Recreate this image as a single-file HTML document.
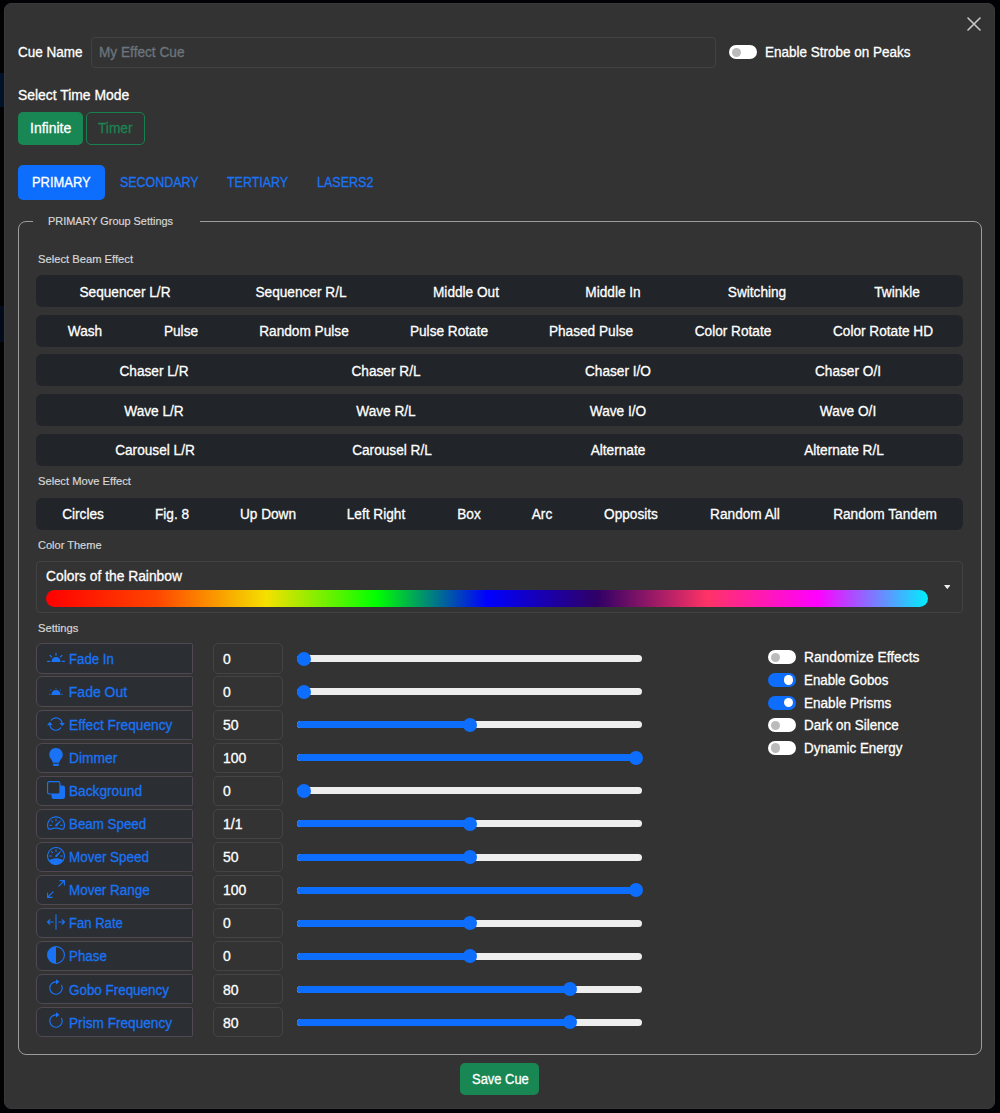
<!DOCTYPE html>
<html><head><meta charset="utf-8"><style>
*{box-sizing:border-box;margin:0;padding:0}
html,body{width:1000px;height:1113px;overflow:hidden;background:#020204;font-family:"Liberation Sans",sans-serif;color:#fff}
.modal{position:absolute;left:4px;top:3px;width:991px;height:1106.2px;background:#333;border:1px solid #393939;border-radius:7px}
.a{position:absolute;white-space:nowrap;line-height:1;transform-origin:0 0;-webkit-text-stroke:0.3px currentColor}
.input{position:absolute;border:1px solid #424242;border-radius:6px}
.box{position:absolute;border-radius:5px}
.row{position:absolute;left:36px;width:927px;height:32px;background:#212529;border-radius:6px}
.fs{position:absolute;left:17.5px;top:220.6px;width:964.2px;height:834.2px;border:1.5px solid #9c9c9c;border-radius:8px}
.lg{position:absolute;left:33px;top:214px;width:167px;height:14px;background:#333}
.tog{position:absolute;width:28px;height:14px;border-radius:7px;background:#fff}
.tog::after{content:"";position:absolute;left:2.8px;top:2.5px;width:9.3px;height:9.3px;border-radius:50%;background:#bbb}
.tog.on{background:#0d6efd}
.tog.on::after{left:15.9px;background:#fff}
.lbl{position:absolute;left:36px;width:157px;height:30.4px;background:#2b2f33;border:1px solid #504852;border-radius:6px 1.5px 1.5px 6px}
.lbl svg{position:absolute;left:10px;top:4.5px}
.val{position:absolute;left:213.2px;width:69.8px;height:30.4px;border:1px solid #444;border-radius:5px}
.sl{position:absolute;left:297px;width:345px;height:7px;border-radius:4px;background:#eee}
.sl .f{position:absolute;left:0;top:0;height:7px;border-radius:4px;background:#0d6efd}
.sl .k{position:absolute;top:-3.5px;width:14px;height:14px;border-radius:50%;background:#0d6efd}
</style></head><body>
<div style="position:absolute;left:0;top:72.6px;width:5px;height:34px;background:#00112a"></div><div style="position:absolute;left:0;top:305.5px;width:5px;height:36px;background:#020b1c"></div>
<div class="modal"></div>
<svg style="position:absolute;left:967px;top:17px" width="14" height="14" viewBox="0 0 14 14"><path d="M1 1L13 13M13 1L1 13" stroke="#c8c8c8" stroke-width="1.6" stroke-linecap="round"/></svg>
<div class="a" style="left:18px;top:45px;font-size:14px;transform:scaleX(0.964);">Cue Name</div>
<div class="input" style="left:90.5px;top:37.1px;width:625.5px;height:30.8px;border-radius:4px"></div>
<div class="a" style="left:99px;top:45px;font-size:14px;color:#6c757d;transform:scaleX(0.975);">My Effect Cue</div>
<div class="tog" style="left:729.3px;top:45px;height:14.4px"></div>
<div class="a" style="left:765px;top:45px;font-size:14px;transform:scaleX(0.963);">Enable Strobe on Peaks</div>
<div class="a" style="left:18px;top:88px;font-size:14px;transform:scaleX(0.992);">Select Time Mode</div>
<div class="box" style="left:18px;top:112px;width:65px;height:32.5px;background:#198754"></div>
<div class="a" style="left:30px;top:121px;font-size:14px;">Infinite</div>
<div class="box" style="left:86px;top:112px;width:59px;height:32.5px;border:1px solid #18804f"></div>
<div class="a" style="left:98px;top:121px;font-size:14px;color:#1b8352;transform:scaleX(0.978);">Timer</div>
<div class="box" style="left:18px;top:165px;width:87px;height:34.5px;background:#0d6efd"></div>
<div class="a" style="left:32.4px;top:175px;font-size:14px;transform:scaleX(0.922);">PRIMARY</div>
<div class="a" style="left:119.5px;top:175px;font-size:14px;color:#1a73f5;transform:scaleX(0.889);">SECONDARY</div>
<div class="a" style="left:226.9px;top:175px;font-size:14px;color:#1a73f5;transform:scaleX(0.890);">TERTIARY</div>
<div class="a" style="left:316.6px;top:175px;font-size:14px;color:#1a73f5;transform:scaleX(0.895);">LASERS2</div>
<div class="fs"></div>
<div class="lg"></div>
<div class="a" style="left:48px;top:214.9px;font-size:11.6px;color:#d6d6d6;transform:scaleX(0.940);-webkit-text-stroke-width:0.2px">PRIMARY Group Settings</div>
<div class="a" style="left:37.6px;top:252.8px;font-size:11.6px;color:#d6d6d6;transform:scaleX(0.966);-webkit-text-stroke-width:0.2px">Select Beam Effect</div>
<div class="row" style="top:275px"></div>
<div class="a" style="left:125.25px;top:284.5px;font-size:14px;transform-origin:50% 0;transform:translateX(-50%) scaleX(0.975);">Sequencer L/R</div>
<div class="a" style="left:301.25px;top:284.5px;font-size:14px;transform-origin:50% 0;transform:translateX(-50%) scaleX(0.975);">Sequencer R/L</div>
<div class="a" style="left:465.75px;top:284.5px;font-size:14px;transform-origin:50% 0;transform:translateX(-50%) scaleX(0.975);">Middle Out</div>
<div class="a" style="left:613.25px;top:284.5px;font-size:14px;transform-origin:50% 0;transform:translateX(-50%) scaleX(0.975);">Middle In</div>
<div class="a" style="left:757.25px;top:284.5px;font-size:14px;transform-origin:50% 0;transform:translateX(-50%) scaleX(0.975);">Switching</div>
<div class="a" style="left:896.75px;top:284.5px;font-size:14px;transform-origin:50% 0;transform:translateX(-50%) scaleX(0.975);">Twinkle</div>
<div class="row" style="top:314.7px"></div>
<div class="a" style="left:84.75px;top:324.2px;font-size:14px;transform-origin:50% 0;transform:translateX(-50%) scaleX(0.975);">Wash</div>
<div class="a" style="left:180.5px;top:324.2px;font-size:14px;transform-origin:50% 0;transform:translateX(-50%) scaleX(0.975);">Pulse</div>
<div class="a" style="left:303.75px;top:324.2px;font-size:14px;transform-origin:50% 0;transform:translateX(-50%) scaleX(0.975);">Random Pulse</div>
<div class="a" style="left:449px;top:324.2px;font-size:14px;transform-origin:50% 0;transform:translateX(-50%) scaleX(0.975);">Pulse Rotate</div>
<div class="a" style="left:591px;top:324.2px;font-size:14px;transform-origin:50% 0;transform:translateX(-50%) scaleX(0.975);">Phased Pulse</div>
<div class="a" style="left:733px;top:324.2px;font-size:14px;transform-origin:50% 0;transform:translateX(-50%) scaleX(0.975);">Color Rotate</div>
<div class="a" style="left:883px;top:324.2px;font-size:14px;transform-origin:50% 0;transform:translateX(-50%) scaleX(0.975);">Color Rotate HD</div>
<div class="row" style="top:354.2px"></div>
<div class="a" style="left:154px;top:363.7px;font-size:14px;transform-origin:50% 0;transform:translateX(-50%) scaleX(0.975);">Chaser L/R</div>
<div class="a" style="left:386px;top:363.7px;font-size:14px;transform-origin:50% 0;transform:translateX(-50%) scaleX(0.975);">Chaser R/L</div>
<div class="a" style="left:618px;top:363.7px;font-size:14px;transform-origin:50% 0;transform:translateX(-50%) scaleX(0.975);">Chaser I/O</div>
<div class="a" style="left:848px;top:363.7px;font-size:14px;transform-origin:50% 0;transform:translateX(-50%) scaleX(0.975);">Chaser O/I</div>
<div class="row" style="top:394px"></div>
<div class="a" style="left:154px;top:403.5px;font-size:14px;transform-origin:50% 0;transform:translateX(-50%) scaleX(0.975);">Wave L/R</div>
<div class="a" style="left:386px;top:403.5px;font-size:14px;transform-origin:50% 0;transform:translateX(-50%) scaleX(0.975);">Wave R/L</div>
<div class="a" style="left:618px;top:403.5px;font-size:14px;transform-origin:50% 0;transform:translateX(-50%) scaleX(0.975);">Wave I/O</div>
<div class="a" style="left:848px;top:403.5px;font-size:14px;transform-origin:50% 0;transform:translateX(-50%) scaleX(0.975);">Wave O/I</div>
<div class="row" style="top:433.6px"></div>
<div class="a" style="left:155px;top:443.1px;font-size:14px;transform-origin:50% 0;transform:translateX(-50%) scaleX(0.975);">Carousel L/R</div>
<div class="a" style="left:392px;top:443.1px;font-size:14px;transform-origin:50% 0;transform:translateX(-50%) scaleX(0.975);">Carousel R/L</div>
<div class="a" style="left:618px;top:443.1px;font-size:14px;transform-origin:50% 0;transform:translateX(-50%) scaleX(0.975);">Alternate</div>
<div class="a" style="left:844px;top:443.1px;font-size:14px;transform-origin:50% 0;transform:translateX(-50%) scaleX(0.975);">Alternate R/L</div>
<div class="a" style="left:37.6px;top:474.8px;font-size:11.6px;color:#d6d6d6;transform:scaleX(0.964);-webkit-text-stroke-width:0.2px">Select Move Effect</div>
<div class="row" style="top:497.5px"></div>
<div class="a" style="left:83px;top:507px;font-size:14px;transform-origin:50% 0;transform:translateX(-50%) scaleX(0.975);">Circles</div>
<div class="a" style="left:172px;top:507px;font-size:14px;transform-origin:50% 0;transform:translateX(-50%) scaleX(0.975);">Fig. 8</div>
<div class="a" style="left:268px;top:507px;font-size:14px;transform-origin:50% 0;transform:translateX(-50%) scaleX(0.975);">Up Down</div>
<div class="a" style="left:376px;top:507px;font-size:14px;transform-origin:50% 0;transform:translateX(-50%) scaleX(0.975);">Left Right</div>
<div class="a" style="left:469px;top:507px;font-size:14px;transform-origin:50% 0;transform:translateX(-50%) scaleX(0.975);">Box</div>
<div class="a" style="left:542px;top:507px;font-size:14px;transform-origin:50% 0;transform:translateX(-50%) scaleX(0.975);">Arc</div>
<div class="a" style="left:631px;top:507px;font-size:14px;transform-origin:50% 0;transform:translateX(-50%) scaleX(0.975);">Opposits</div>
<div class="a" style="left:745px;top:507px;font-size:14px;transform-origin:50% 0;transform:translateX(-50%) scaleX(0.975);">Random All</div>
<div class="a" style="left:885px;top:507px;font-size:14px;transform-origin:50% 0;transform:translateX(-50%) scaleX(0.975);">Random Tandem</div>
<div class="a" style="left:37.7px;top:538.8px;font-size:11.6px;color:#d6d6d6;transform:scaleX(0.952);-webkit-text-stroke-width:0.2px">Color Theme</div>
<div class="input" style="left:36px;top:560.6px;width:926.8px;height:52px;border-color:#424242;border-radius:4px"></div>
<div class="a" style="left:46.4px;top:569px;font-size:14px;transform:scaleX(0.987);">Colors of the Rainbow</div>
<div style="position:absolute;left:46px;top:590px;width:882px;height:17px;border-radius:9px;background:linear-gradient(90deg,#ff0000 0%,#ff4500 12.5%,#f5e000 25%,#00ff00 37.5%,#0000ff 50%,#300066 62.5%,#ff3366 75%,#ff00ff 87.5%,#00eeff 100%)"></div>
<svg style="position:absolute;left:943.8px;top:585.2px" width="6.5" height="4.2" viewBox="0 0 8 5"><path d="M0 0H8L4 5Z" fill="#eee"/></svg>
<div class="a" style="left:37.7px;top:621.8px;font-size:11.6px;color:#d6d6d6;transform:scaleX(0.962);-webkit-text-stroke-width:0.2px">Settings</div>
<div class="lbl" style="top:643.4px"><svg width="18" height="18" viewBox="0 0 16 16" fill="#1a73f5"><path d="M8 3a.5.5 0 0 1 .5.5v2a.5.5 0 0 1-1 0v-2A.5.5 0 0 1 8 3m8 8a.5.5 0 0 1-.5.5h-2a.5.5 0 0 1 0-1h2a.5.5 0 0 1 .5.5m-13.5.5a.5.5 0 0 0 0-1h-2a.5.5 0 0 0 0 1zm11.157-6.157a.5.5 0 0 1 0 .707l-1.414 1.414a.5.5 0 1 1-.707-.707l1.414-1.414a.5.5 0 0 1 .707 0m-9.9 2.121a.5.5 0 0 0 .707-.707L3.05 5.343a.5.5 0 1 0-.707.707zM8 7a4 4 0 0 0-4 4 .5.5 0 0 0 .5.5h7a.5.5 0 0 0 .5-.5 4 4 0 0 0-4-4"/></svg></div>
<div class="a" style="left:68.8px;top:652.0px;font-size:14px;color:#1a73f5;transform:scaleX(0.943);">Fade In</div>
<div class="val" style="top:643.4px"></div>
<div class="a" style="left:223px;top:652.0px;font-size:14px;">0</div>
<div class="sl" style="top:655.2px"><div class="f" style="width:10.0px"></div><div class="k" style="left:0.0px"></div></div>
<div class="lbl" style="top:676.4px"><svg width="18" height="18" viewBox="0 0 16 16" fill="#1a73f5"><path d="M8.5 5.5a.5.5 0 1 1-1 0 .5.5 0 0 1 1 0m5 6a.5.5 0 1 1 0-1 .5.5 0 0 1 0 1m-11 0a.5.5 0 1 1 0-1 .5.5 0 0 1 0 1m9.743-4.036a.5.5 0 1 1-.707-.707.5.5 0 0 1 .707.707m-8.486-.707a.5.5 0 1 0-.707.707.5.5 0 0 0 .707-.707M8 7a4 4 0 0 0-4 4 .5.5 0 0 0 .5.5h7a.5.5 0 0 0 .5-.5 4 4 0 0 0-4-4"/></svg></div>
<div class="a" style="left:68.8px;top:685.05px;font-size:14px;color:#1a73f5;">Fade Out</div>
<div class="val" style="top:676.4px"></div>
<div class="a" style="left:223px;top:685.05px;font-size:14px;">0</div>
<div class="sl" style="top:688.2px"><div class="f" style="width:10.0px"></div><div class="k" style="left:0.0px"></div></div>
<div class="lbl" style="top:709.5px"><svg width="18" height="18" viewBox="0 0 16 16" fill="#1a73f5"><path d="M11.534 7h3.932a.25.25 0 0 1 .192.41l-1.966 2.36a.25.25 0 0 1-.384 0l-1.966-2.36a.25.25 0 0 1 .192-.41m-11 2h3.932a.25.25 0 0 0 .192-.41L2.692 6.23a.25.25 0 0 0-.384 0L.342 8.59A.25.25 0 0 0 .534 9"/><path fill-rule="evenodd" d="M8 3c-1.552 0-2.94.707-3.857 1.818a.5.5 0 1 1-.771-.636A6.002 6.002 0 0 1 13.917 7H12.9A5 5 0 0 0 8 3M3.1 9a5.002 5.002 0 0 0 8.757 2.182.5.5 0 1 1 .771.636A6.002 6.002 0 0 1 2.083 9z"/></svg></div>
<div class="a" style="left:68.8px;top:718.1px;font-size:14px;color:#1a73f5;transform:scaleX(0.979);">Effect Frequency</div>
<div class="val" style="top:709.5px"></div>
<div class="a" style="left:223px;top:718.1px;font-size:14px;">50</div>
<div class="sl" style="top:721.3px"><div class="f" style="width:176.0px"></div><div class="k" style="left:166.0px"></div></div>
<div class="lbl" style="top:742.5px"><svg width="18" height="18" viewBox="0 0 16 16" fill="#1a73f5"><path d="M2 6a6 6 0 1 1 10.174 4.31c-.203.196-.359.4-.453.619l-.762 1.769A.5.5 0 0 1 10.5 13h-5a.5.5 0 0 1-.46-.302l-.761-1.77a2 2 0 0 0-.453-.618A5.98 5.98 0 0 1 2 6m3 8.5a.5.5 0 0 1 .5-.5h5a.5.5 0 0 1 0 1l-.224.447a1 1 0 0 1-.894.553H6.618a1 1 0 0 1-.894-.553L5.5 15a.5.5 0 0 1-.5-.5"/></svg></div>
<div class="a" style="left:68.8px;top:751.15px;font-size:14px;color:#1a73f5;transform:scaleX(0.988);">Dimmer</div>
<div class="val" style="top:742.5px"></div>
<div class="a" style="left:223px;top:751.15px;font-size:14px;">100</div>
<div class="sl" style="top:754.3px"><div class="f" style="width:342.0px"></div><div class="k" style="left:332.0px"></div></div>
<div class="lbl" style="top:775.6px"><svg width="18" height="18" viewBox="0 0 16 16" fill="#1a73f5"><path d="M0 2a2 2 0 0 1 2-2h8a2 2 0 0 1 2 2v2h2a2 2 0 0 1 2 2v8a2 2 0 0 1-2 2H6a2 2 0 0 1-2-2v-2H2a2 2 0 0 1-2-2zm2-1a1 1 0 0 0-1 1v8a1 1 0 0 0 1 1h8a1 1 0 0 0 1-1V2a1 1 0 0 0-1-1z"/></svg></div>
<div class="a" style="left:68.8px;top:784.1999999999999px;font-size:14px;color:#1a73f5;transform:scaleX(0.977);">Background</div>
<div class="val" style="top:775.6px"></div>
<div class="a" style="left:223px;top:784.1999999999999px;font-size:14px;">0</div>
<div class="sl" style="top:787.4px"><div class="f" style="width:10.0px"></div><div class="k" style="left:0.0px"></div></div>
<div class="lbl" style="top:808.6px"><svg width="18" height="18" viewBox="0 0 16 16" fill="#1a73f5"><path d="M8 4a.5.5 0 0 1 .5.5V6a.5.5 0 0 1-1 0V4.5A.5.5 0 0 1 8 4M3.732 5.732a.5.5 0 0 1 .707 0l.915.914a.5.5 0 1 1-.708.708l-.914-.915a.5.5 0 0 1 0-.707M2 10a.5.5 0 0 1 .5-.5h1.586a.5.5 0 0 1 0 1H2.5A.5.5 0 0 1 2 10m9.5 0a.5.5 0 0 1 .5-.5h1.5a.5.5 0 0 1 0 1H12a.5.5 0 0 1-.5-.5m.754-4.246a.39.39 0 0 0-.527-.02L7.547 9.31a.91.91 0 1 0 1.302 1.258l3.434-4.297a.39.39 0 0 0-.029-.518z"/><path fill-rule="evenodd" d="M0 10a8 8 0 1 1 15.547 2.661c-.442 1.253-1.845 1.602-2.932 1.25C11.309 13.488 9.475 13 8 13c-1.474 0-3.31.488-4.615.911-1.087.352-2.49.003-2.932-1.25A8 8 0 0 1 0 10m8-7a7 7 0 0 0-6.603 9.329c.203.575.923.876 1.68.63C4.397 12.533 6.358 12 8 12s3.604.532 4.923.96c.757.245 1.477-.056 1.68-.631A7 7 0 0 0 8 3"/></svg></div>
<div class="a" style="left:68.8px;top:817.25px;font-size:14px;color:#1a73f5;transform:scaleX(0.954);">Beam Speed</div>
<div class="val" style="top:808.6px"></div>
<div class="a" style="left:223px;top:817.25px;font-size:14px;">1/1</div>
<div class="sl" style="top:820.4px"><div class="f" style="width:176.0px"></div><div class="k" style="left:166.0px"></div></div>
<div class="lbl" style="top:841.7px"><svg width="18" height="18" viewBox="0 0 16 16" fill="#1a73f5"><path d="M8 2a.5.5 0 0 1 .5.5V4a.5.5 0 0 1-1 0V2.5A.5.5 0 0 1 8 2M3.732 3.732a.5.5 0 0 1 .707 0l.915.914a.5.5 0 1 1-.708.708l-.914-.915a.5.5 0 0 1 0-.707M2 8a.5.5 0 0 1 .5-.5h1.586a.5.5 0 0 1 0 1H2.5A.5.5 0 0 1 2 8m9.5 0a.5.5 0 0 1 .5-.5h1.5a.5.5 0 0 1 0 1H12a.5.5 0 0 1-.5-.5m.754-4.246a.39.39 0 0 0-.527-.02L7.547 7.31A.91.91 0 1 0 8.85 8.569l3.434-4.297a.39.39 0 0 0-.029-.518z"/><path fill-rule="evenodd" d="M6.664 15.889A8 8 0 1 1 9.336.11a8 8 0 0 1-2.672 15.78zm-4.665-4.283A11.95 11.95 0 0 1 8 10c2.186 0 4.236.585 5.999 1.606a7 7 0 1 0-11.998 0"/></svg></div>
<div class="a" style="left:68.8px;top:850.3px;font-size:14px;color:#1a73f5;transform:scaleX(0.961);">Mover Speed</div>
<div class="val" style="top:841.7px"></div>
<div class="a" style="left:223px;top:850.3px;font-size:14px;">50</div>
<div class="sl" style="top:853.5px"><div class="f" style="width:176.0px"></div><div class="k" style="left:166.0px"></div></div>
<div class="lbl" style="top:874.8px"><svg width="18" height="18" viewBox="0 0 16 16" fill="#1a73f5"><path fill-rule="evenodd" d="M5.828 10.172a.5.5 0 0 0-.707 0l-4.096 4.096V11.5a.5.5 0 0 0-1 0v3.975a.5.5 0 0 0 .5.5H4.5a.5.5 0 0 0 0-1H1.732l4.096-4.096a.5.5 0 0 0 0-.707m4.344-4.344a.5.5 0 0 0 .707 0l4.096-4.096V4.5a.5.5 0 1 0 1 0V.525a.5.5 0 0 0-.5-.5H11.5a.5.5 0 0 0 0 1h2.768l-4.096 4.096a.5.5 0 0 0 0 .707"/></svg></div>
<div class="a" style="left:68.8px;top:883.35px;font-size:14px;color:#1a73f5;transform:scaleX(0.960);">Mover Range</div>
<div class="val" style="top:874.8px"></div>
<div class="a" style="left:223px;top:883.35px;font-size:14px;">100</div>
<div class="sl" style="top:886.5px"><div class="f" style="width:342.0px"></div><div class="k" style="left:332.0px"></div></div>
<div class="lbl" style="top:907.8px"><svg width="18" height="18" viewBox="0 0 16 16" fill="#1a73f5"><path fill-rule="evenodd" d="M8 15a.5.5 0 0 1-.5-.5v-13a.5.5 0 0 1 1 0v13a.5.5 0 0 1-.5.5M.146 8.354a.5.5 0 0 1 0-.708l2-2a.5.5 0 1 1 .708.708L1.707 7.5H5.5a.5.5 0 0 1 0 1H1.707l1.147 1.146a.5.5 0 0 1-.708.708zM10 8a.5.5 0 0 1 .5-.5h3.793l-1.147-1.146a.5.5 0 0 1 .708-.708l2 2a.5.5 0 0 1 0 .708l-2 2a.5.5 0 0 1-.708-.708L14.293 8.5H10.5A.5.5 0 0 1 10 8"/></svg></div>
<div class="a" style="left:68.8px;top:916.4px;font-size:14px;color:#1a73f5;transform:scaleX(0.934);">Fan Rate</div>
<div class="val" style="top:907.8px"></div>
<div class="a" style="left:223px;top:916.4px;font-size:14px;">0</div>
<div class="sl" style="top:919.6px"><div class="f" style="width:176.0px"></div><div class="k" style="left:166.0px"></div></div>
<div class="lbl" style="top:940.8px"><svg width="18" height="18" viewBox="0 0 16 16" fill="#1a73f5"><path d="M8 15A7 7 0 1 0 8 1zm0 1A8 8 0 1 1 8 0a8 8 0 0 1 0 16"/></svg></div>
<div class="a" style="left:68.8px;top:949.4499999999999px;font-size:14px;color:#1a73f5;transform:scaleX(0.952);">Phase</div>
<div class="val" style="top:940.8px"></div>
<div class="a" style="left:223px;top:949.4499999999999px;font-size:14px;">0</div>
<div class="sl" style="top:952.6px"><div class="f" style="width:176.0px"></div><div class="k" style="left:166.0px"></div></div>
<div class="lbl" style="top:973.9px"><svg width="18" height="18" viewBox="0 0 16 16" fill="#1a73f5"><path fill-rule="evenodd" d="M8 3a5 5 0 1 0 4.546 2.914.5.5 0 0 1 .908-.417A6 6 0 1 1 8 2z"/><path d="M8 4.466V.534a.25.25 0 0 1 .41-.192l2.36 1.966c.12.1.12.284 0 .384L8.41 4.658A.25.25 0 0 1 8 4.466"/></svg></div>
<div class="a" style="left:68.8px;top:982.5px;font-size:14px;color:#1a73f5;transform:scaleX(0.958);">Gobo Frequency</div>
<div class="val" style="top:973.9px"></div>
<div class="a" style="left:223px;top:982.5px;font-size:14px;">80</div>
<div class="sl" style="top:985.7px"><div class="f" style="width:275.6px"></div><div class="k" style="left:265.6px"></div></div>
<div class="lbl" style="top:1006.9px"><svg width="18" height="18" viewBox="0 0 16 16" fill="#1a73f5"><path fill-rule="evenodd" d="M8 3a5 5 0 1 0 4.546 2.914.5.5 0 0 1 .908-.417A6 6 0 1 1 8 2z"/><path d="M8 4.466V.534a.25.25 0 0 1 .41-.192l2.36 1.966c.12.1.12.284 0 .384L8.41 4.658A.25.25 0 0 1 8 4.466"/></svg></div>
<div class="a" style="left:68.8px;top:1015.55px;font-size:14px;color:#1a73f5;transform:scaleX(0.974);">Prism Frequency</div>
<div class="val" style="top:1006.9px"></div>
<div class="a" style="left:223px;top:1015.55px;font-size:14px;">80</div>
<div class="sl" style="top:1018.7px"><div class="f" style="width:275.6px"></div><div class="k" style="left:265.6px"></div></div>
<div class="tog" style="left:768px;top:650.2px"></div>
<div class="a" style="left:803.6px;top:650.2px;font-size:14px;transform:scaleX(0.984);">Randomize Effects</div>
<div class="tog on" style="left:768px;top:672.9px"></div>
<div class="a" style="left:803.6px;top:672.85px;font-size:14px;transform:scaleX(0.951);">Enable Gobos</div>
<div class="tog on" style="left:768px;top:695.5px"></div>
<div class="a" style="left:803.6px;top:695.5px;font-size:14px;transform:scaleX(0.968);">Enable Prisms</div>
<div class="tog" style="left:768px;top:718.2px"></div>
<div class="a" style="left:803.6px;top:718.1500000000001px;font-size:14px;transform:scaleX(0.959);">Dark on Silence</div>
<div class="tog" style="left:768px;top:740.8px"></div>
<div class="a" style="left:803.6px;top:740.8000000000001px;font-size:14px;transform:scaleX(0.958);">Dynamic Energy</div>
<div class="box" style="left:460px;top:1063px;width:79px;height:32px;background:#198754"></div>
<div class="a" style="left:471.6px;top:1072px;font-size:14px;transform:scaleX(0.924);">Save Cue</div>
</body></html>
